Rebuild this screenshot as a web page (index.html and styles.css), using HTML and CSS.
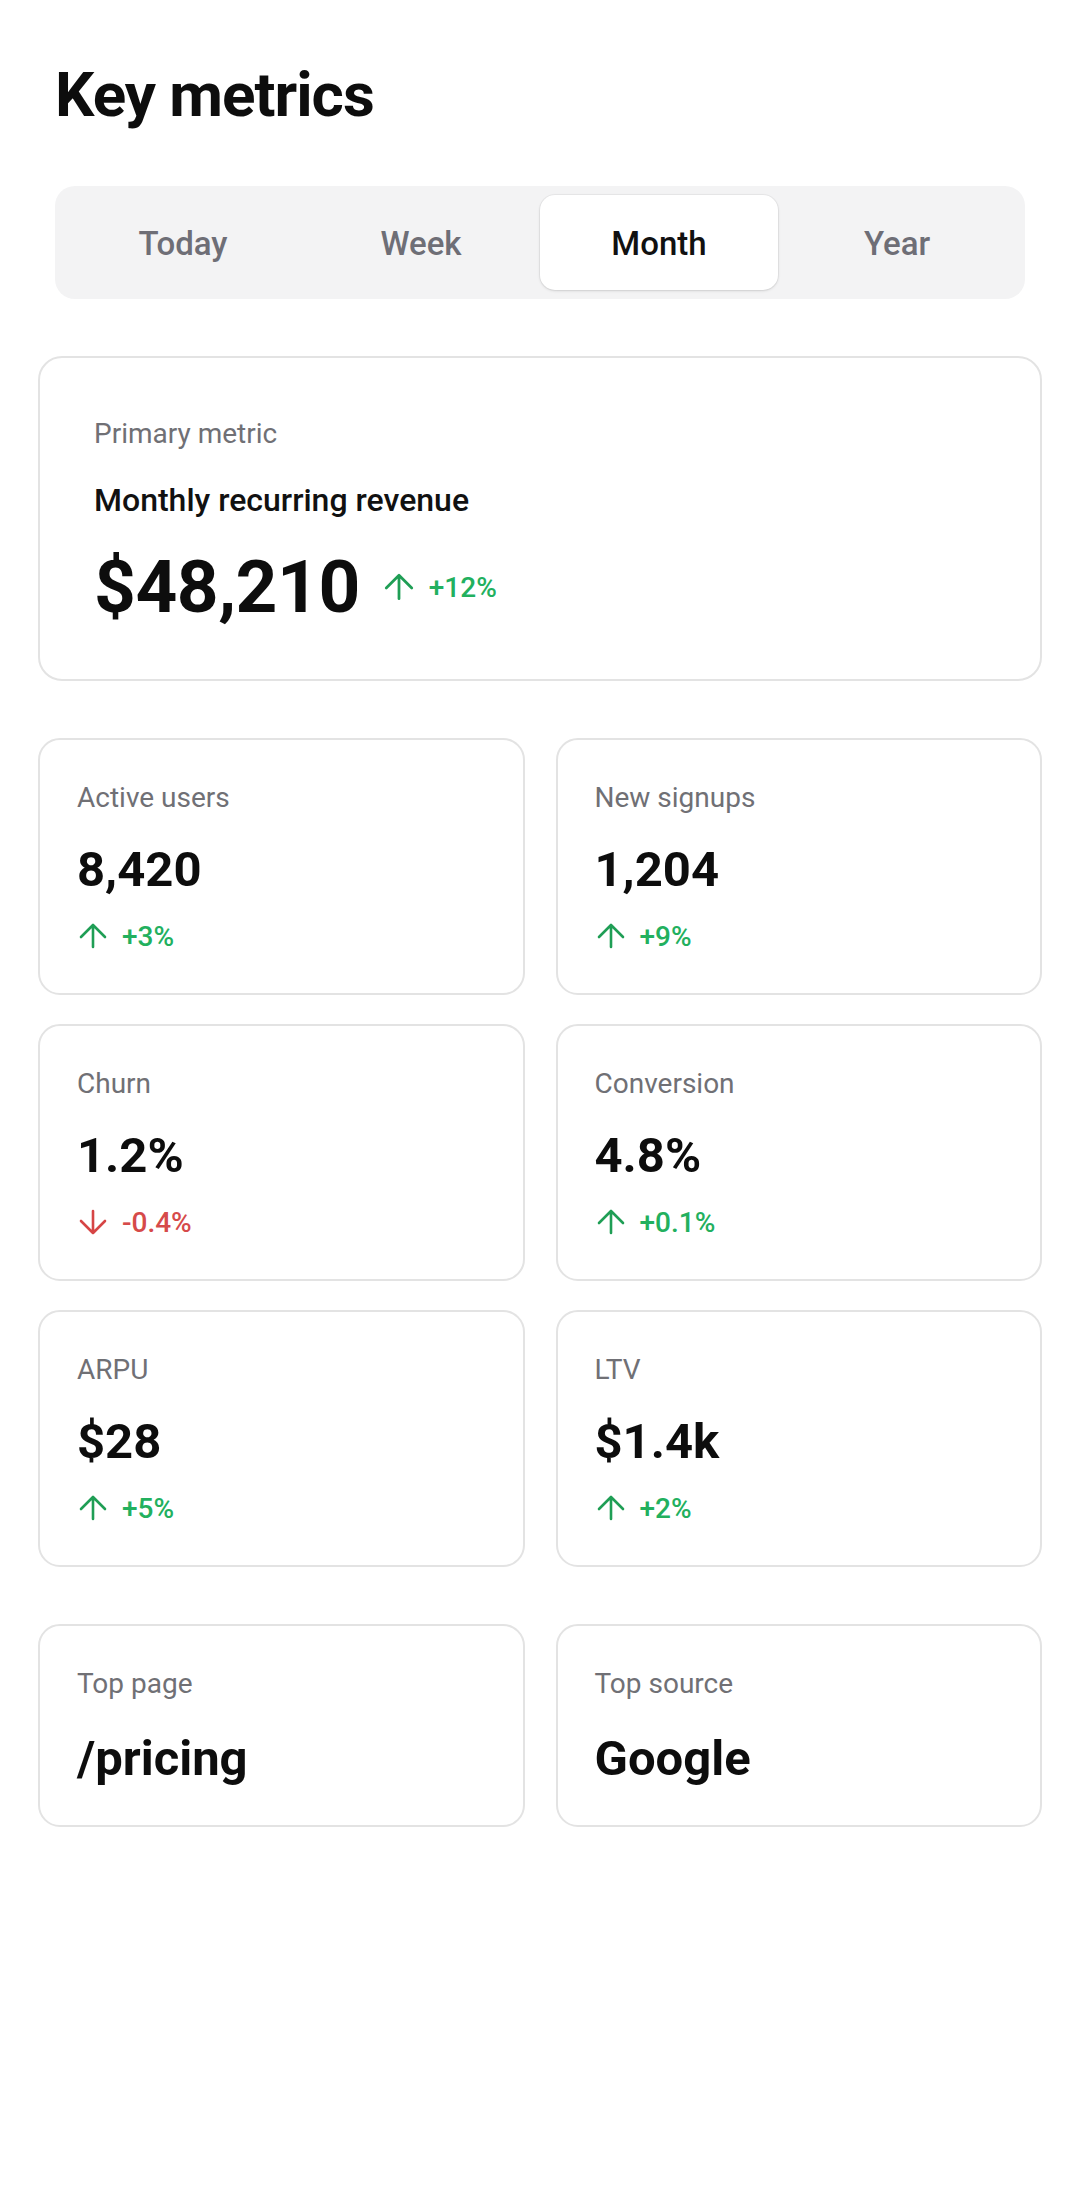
FILE: index.html
```html
<!DOCTYPE html>
<html lang="en">
<head>
<meta charset="utf-8">
<title>Key metrics</title>
<link rel="stylesheet" href="styles.css">
</head>
<body>
<main class="page">
  <h1 class="title">Key metrics</h1>

  <div class="seg">
    <div class="tab">Today</div>
    <div class="tab">Week</div>
    <div class="tab active">Month</div>
    <div class="tab">Year</div>
  </div>

  <section class="primary">
    <div class="label">Primary metric</div>
    <div class="primary-name">Monthly recurring revenue</div>
    <div class="primary-row">
      <div class="primary-value">$48,210</div>
      <div class="delta up big">
        <svg class="arrow" viewBox="0 0 32 28"><path d="M16 25V3M4 15L16 3l12 12"/></svg>
        <span>+12%</span>
      </div>
    </div>
  </section>

  <section class="grid">
    <div class="card">
      <div class="label">Active users</div>
      <div class="value">8,420</div>
      <div class="delta up"><svg class="arrow" viewBox="0 0 32 28"><path d="M16 25V3M4 15L16 3l12 12"/></svg><span>+3%</span></div>
    </div>
    <div class="card">
      <div class="label">New signups</div>
      <div class="value">1,204</div>
      <div class="delta up"><svg class="arrow" viewBox="0 0 32 28"><path d="M16 25V3M4 15L16 3l12 12"/></svg><span>+9%</span></div>
    </div>
    <div class="card">
      <div class="label">Churn</div>
      <div class="value">1.2%</div>
      <div class="delta down"><svg class="arrow" viewBox="0 0 32 28"><path d="M16 3V25M4 13L16 25l12-12"/></svg><span>-0.4%</span></div>
    </div>
    <div class="card">
      <div class="label">Conversion</div>
      <div class="value">4.8%</div>
      <div class="delta up"><svg class="arrow" viewBox="0 0 32 28"><path d="M16 25V3M4 15L16 3l12 12"/></svg><span>+0.1%</span></div>
    </div>
    <div class="card">
      <div class="label">ARPU</div>
      <div class="value">$28</div>
      <div class="delta up"><svg class="arrow" viewBox="0 0 32 28"><path d="M16 25V3M4 15L16 3l12 12"/></svg><span>+5%</span></div>
    </div>
    <div class="card">
      <div class="label">LTV</div>
      <div class="value">$1.4k</div>
      <div class="delta up"><svg class="arrow" viewBox="0 0 32 28"><path d="M16 25V3M4 15L16 3l12 12"/></svg><span>+2%</span></div>
    </div>
  </section>

  <section class="grid bottom">
    <div class="card short">
      <div class="label">Top page</div>
      <div class="value tall-gap">/pricing</div>
    </div>
    <div class="card short">
      <div class="label">Top source</div>
      <div class="value tall-gap">Google</div>
    </div>
  </section>
</main>
</body>
</html>
```

FILE: styles.css
```css
* { box-sizing: border-box; }

html, body {
  margin: 0;
  background: #ffffff;
}

body {
  font-family: Roboto, "Noto Sans", "Liberation Sans", sans-serif;
  color: #111111;
}

.page {
  padding: 59px 38px 0;
}

.title {
  margin: 0 17px;
  font-size: 62px;
  line-height: 72px;
  font-weight: 700;
  letter-spacing: -1px;
  color: #0d0d0d;
}

.seg {
  margin: 55px 17px 0;
  padding: 9px;
  background: #f3f3f4;
  border-radius: 20px;
  display: grid;
  grid-template-columns: repeat(4, 1fr);
}

.tab {
  height: 95px;
  line-height: 97px;
  text-align: center;
  font-size: 33px;
  font-weight: 500;
  color: #6e6e76;
  border-radius: 15px;
}

.tab.active {
  background: #ffffff;
  color: #111111;
  box-shadow: 0 1px 3px rgba(0, 0, 0, 0.12), 0 0 0 1px rgba(0, 0, 0, 0.04);
}

.primary {
  margin-top: 57px;
  border: 2px solid #e3e3e3;
  border-radius: 24px;
  padding: 59px 54px 50px;
}

.label {
  font-size: 28px;
  line-height: 34px;
  color: #707075;
}

.primary-name {
  margin-top: 30px;
  font-size: 32px;
  line-height: 38px;
  font-weight: 500;
  color: #111111;
}

.primary-row {
  margin-top: 26px;
  display: flex;
  align-items: center;
}

.primary-value {
  font-size: 73px;
  line-height: 84px;
  font-weight: 700;
  letter-spacing: -0.5px;
  color: #0d0d0d;
}

.delta {
  display: flex;
  align-items: center;
  height: 32px;
  font-size: 28px;
  font-weight: 500;
}

.delta span { margin-left: 13px; }

.delta.big {
  margin-left: 22px;
  font-size: 28px;
}

.delta.big .arrow {
  width: 34px;
  height: 30px;
}

.arrow {
  width: 32px;
  height: 28px;
  flex: none;
}

.arrow path {
  fill: none;
  stroke-width: 2.6;
  stroke-linecap: round;
  stroke-linejoin: round;
}

.up { color: #22b05e; }
.up .arrow path { stroke: #1f9e55; }
.down { color: #d64a4a; }
.down .arrow path { stroke: #d64545; }

.grid {
  margin-top: 57px;
  display: grid;
  grid-template-columns: 1fr 1fr;
  column-gap: 31px;
  row-gap: 29px;
}

.card {
  height: 257px;
  border: 2px solid #e3e3e3;
  border-radius: 22px;
  padding: 41px 37px 0;
}

.card.short {
  height: 203px;
}

.value {
  margin-top: 27px;
  font-size: 49px;
  line-height: 56px;
  font-weight: 700;
  color: #0d0d0d;
}

.value.tall-gap {
  margin-top: 30px;
}

.card .delta {
  margin-top: 22px;
}
```
